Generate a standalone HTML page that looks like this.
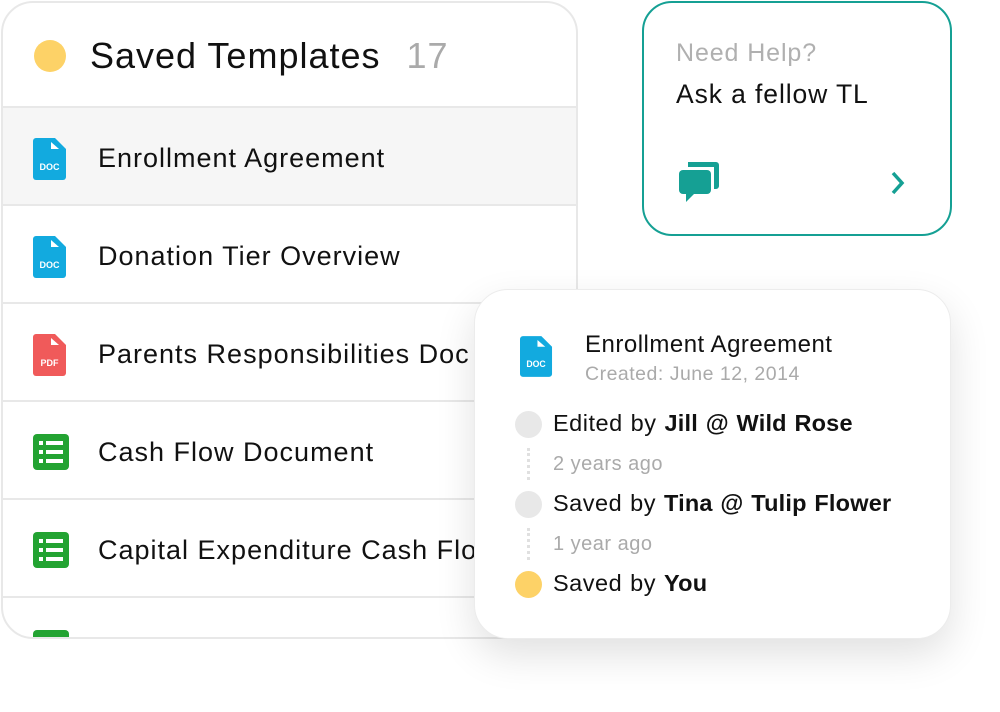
<!DOCTYPE html>
<html><head><meta charset="utf-8"><style>
*{margin:0;padding:0;box-sizing:border-box}
body{width:1000px;height:712px;background:#fff;font-family:"Liberation Sans",sans-serif;position:relative;overflow:hidden;color:#111}
.card{position:absolute;left:1px;top:1px;width:577px;height:638px;border:2px solid #e8e8e8;border-radius:32px;overflow:hidden;background:#fff}
.hdr{height:105px;border-bottom:2px solid #e8e8e8;position:relative}
.dot{position:absolute;left:31px;top:37px;width:32px;height:32px;border-radius:50%;background:#fdd267}
.hdr h1{position:absolute;left:87px;top:32px;font-size:36px;font-weight:normal;letter-spacing:1px}
.hdr h1 span{color:#aaa;margin-left:26px}
.row{height:98px;border-bottom:2px solid #e8e8e8;position:relative;white-space:nowrap}
.row .t{position:absolute;left:95px;top:35px;font-size:27px;letter-spacing:1px}
.row svg{position:absolute;left:30px;top:30px}
.help{position:absolute;left:642px;top:1px;width:310px;height:235px;border:2px solid #15a094;border-radius:30px;background:#fff}
.pop{position:absolute;left:474px;top:289px;width:477px;height:350px;border-radius:34px;background:#fff;border:1px solid #ececec;box-shadow:0 16px 40px rgba(0,0,0,0.12)}
.pop .l{position:absolute;font-size:23.5px;white-space:nowrap;letter-spacing:0.5px;word-spacing:1px}
.pop .l b{font-weight:bold;letter-spacing:0.2px}
.g{color:#aaa}
.c{position:absolute;left:40px;width:27px;height:27px;border-radius:50%;background:#e8e8e8}
.d{position:absolute;left:52px;width:3px;border-left:3px dotted #e0e0e0}
</style></head><body>
<div class="card">
<div class="hdr"><div class="dot"></div><h1>Saved Templates<span>17</span></h1></div>
<div class="row" style="background:#f6f6f6"><svg width="34" height="42" viewBox="0 0 34 42"><path d="M3 0H22L33 11V39a3 3 0 0 1-3 3H3a3 3 0 0 1-3-3V3a3 3 0 0 1 3-3z" fill="#12aadf"/><path d="M18 4V11H26z" fill="#fff"/><text x="16.5" y="32" font-size="9" font-weight="bold" fill="#fff" text-anchor="middle" font-family="Liberation Sans">DOC</text></svg><div class="t">Enrollment Agreement</div></div>
<div class="row"><svg width="34" height="42" viewBox="0 0 34 42"><path d="M3 0H22L33 11V39a3 3 0 0 1-3 3H3a3 3 0 0 1-3-3V3a3 3 0 0 1 3-3z" fill="#12aadf"/><path d="M18 4V11H26z" fill="#fff"/><text x="16.5" y="32" font-size="9" font-weight="bold" fill="#fff" text-anchor="middle" font-family="Liberation Sans">DOC</text></svg><div class="t">Donation Tier Overview</div></div>
<div class="row"><svg width="34" height="42" viewBox="0 0 34 42"><path d="M3 0H22L33 11V39a3 3 0 0 1-3 3H3a3 3 0 0 1-3-3V3a3 3 0 0 1 3-3z" fill="#f05a5a"/><path d="M18 4V11H26z" fill="#fff"/><text x="16.5" y="32" font-size="9" font-weight="bold" fill="#fff" text-anchor="middle" font-family="Liberation Sans">PDF</text></svg><div class="t">Parents Responsibilities Doc</div></div>
<div class="row"><svg width="36" height="36" viewBox="0 0 36 36" style="top:32px"><rect width="36" height="36" rx="4" fill="#23a332"/><g fill="#fff"><rect x="6" y="7" width="4" height="4"/><rect x="13" y="7" width="17" height="4"/><rect x="6" y="16" width="4" height="4"/><rect x="13" y="16" width="17" height="4"/><rect x="6" y="25" width="4" height="4"/><rect x="13" y="25" width="17" height="4"/></g></svg><div class="t">Cash Flow Document</div></div>
<div class="row"><svg width="36" height="36" viewBox="0 0 36 36" style="top:32px"><rect width="36" height="36" rx="4" fill="#23a332"/><g fill="#fff"><rect x="6" y="7" width="4" height="4"/><rect x="13" y="7" width="17" height="4"/><rect x="6" y="16" width="4" height="4"/><rect x="13" y="16" width="17" height="4"/><rect x="6" y="25" width="4" height="4"/><rect x="13" y="25" width="17" height="4"/></g></svg><div class="t">Capital Expenditure Cash Flow</div></div>
<div class="row" style="border:none"><svg width="36" height="36" viewBox="0 0 36 36" style="top:32px"><rect width="36" height="36" rx="4" fill="#23a332"/></svg><div class="t">Tax Depreciation Report</div></div>
</div>
<div class="help">
<div style="position:absolute;left:32px;top:36px;font-size:25px;color:#b0b0b0;letter-spacing:0.9px">Need Help?</div>
<div style="position:absolute;left:32px;top:76px;font-size:26.5px;letter-spacing:0.9px">Ask a fellow TL</div>
<svg style="position:absolute;left:35px;top:158px" width="42" height="42" viewBox="0 0 42 42"><path d="M9 1h28a3 3 0 0 1 3 3v21a3 3 0 0 1-3 3h-2V6H9z" fill="#15a094"/><rect x="0" y="9" width="32" height="24" rx="4" fill="#15a094"/><path d="M7 31v10l9-9z" fill="#15a094"/></svg>
<svg style="position:absolute;left:246px;top:168px" width="16" height="24" viewBox="0 0 16 24"><path d="M3 2l9 10-9 10" fill="none" stroke="#15a094" stroke-width="3.5"/></svg>
</div>
<div class="pop">
<svg style="position:absolute;left:45px;top:46px" width="33" height="41" viewBox="0 0 34 42"><path d="M3 0H22L33 11V39a3 3 0 0 1-3 3H3a3 3 0 0 1-3-3V3a3 3 0 0 1 3-3z" fill="#12aadf"/><path d="M18 4V11H26z" fill="#fff"/><text x="16.5" y="32" font-size="9" font-weight="bold" fill="#fff" text-anchor="middle" font-family="Liberation Sans">DOC</text></svg>
<div class="l" style="left:110px;top:41px;font-size:24px;word-spacing:0">Enrollment Agreement</div>
<div class="l g" style="left:110px;top:73px;font-size:19.5px;word-spacing:0">Created: June 12, 2014</div>
<div class="c" style="top:121px"></div>
<div class="l" style="left:78px;top:120px">Edited by <b>Jill @ Wild Rose</b></div>
<div class="d" style="top:158px;height:32px"></div>
<div class="l g" style="left:78px;top:163px;font-size:20px;word-spacing:0">2 years ago</div>
<div class="c" style="top:201px"></div>
<div class="l" style="left:78px;top:200px">Saved by <b>Tina @ Tulip Flower</b></div>
<div class="d" style="top:238px;height:32px"></div>
<div class="l g" style="left:78px;top:243px;font-size:20px;word-spacing:0">1 year ago</div>
<div class="c" style="top:281px;background:#fdd267"></div>
<div class="l" style="left:78px;top:280px">Saved by <b>You</b></div>
</div>
</body></html>
